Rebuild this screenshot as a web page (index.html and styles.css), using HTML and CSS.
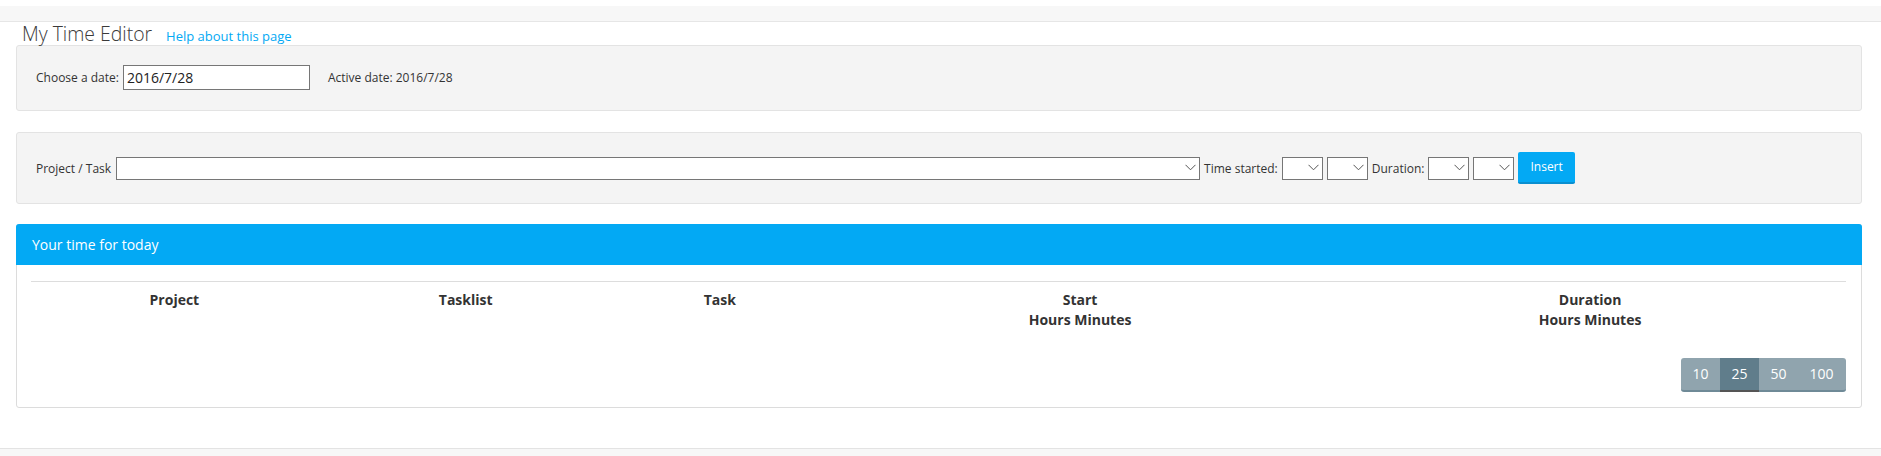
FILE: index.html
```html
<!DOCTYPE html>
<html lang="en">
<head>
<meta charset="utf-8">
<title>My Time Editor</title>
<link rel="stylesheet" href="styles.css">
</head>
<body>
<div class="topbar"></div>
<main class="page">
  <div class="title-row">
    <h1 class="title">My Time Editor</h1>
    <a class="help" href="#">Help about this page</a>
  </div>

  <div class="well well-date">
    <label class="lbl">Choose a date:</label>
    <input class="date-input" type="text" value="2016/7/28">
    <span class="lbl active-date">Active date: 2016/7/28</span>
  </div>

  <div class="well well-form">
    <label class="lbl">Project / Task</label>
    <div class="select select-wide"><svg class="chev" width="11" height="7" viewBox="0 0 11 7"><path d="M0.5 0.8 L5.5 5.8 L10.5 0.8" fill="none" stroke="#555" stroke-width="1"/></svg></div>
    <label class="lbl">Time started:</label>
    <div class="select select-small"><svg class="chev" width="11" height="7" viewBox="0 0 11 7"><path d="M0.5 0.8 L5.5 5.8 L10.5 0.8" fill="none" stroke="#555" stroke-width="1"/></svg></div>
    <div class="select select-small"><svg class="chev" width="11" height="7" viewBox="0 0 11 7"><path d="M0.5 0.8 L5.5 5.8 L10.5 0.8" fill="none" stroke="#555" stroke-width="1"/></svg></div>
    <label class="lbl">Duration:</label>
    <div class="select select-small"><svg class="chev" width="11" height="7" viewBox="0 0 11 7"><path d="M0.5 0.8 L5.5 5.8 L10.5 0.8" fill="none" stroke="#555" stroke-width="1"/></svg></div>
    <div class="select select-small"><svg class="chev" width="11" height="7" viewBox="0 0 11 7"><path d="M0.5 0.8 L5.5 5.8 L10.5 0.8" fill="none" stroke="#555" stroke-width="1"/></svg></div>
    <button class="btn-insert" type="button">Insert</button>
  </div>

  <section class="panel">
    <div class="panel-head">Your time for today</div>
    <div class="panel-body">
      <table class="grid">
        <colgroup>
          <col class="c1"><col class="c2"><col class="c3"><col class="c4"><col class="c5">
        </colgroup>
        <thead>
          <tr>
            <th>Project</th>
            <th>Tasklist</th>
            <th>Task</th>
            <th>Start<br>Hours Minutes</th>
            <th>Duration<br>Hours Minutes</th>
          </tr>
        </thead>
      </table>
      <div class="pager">
        <span class="pg">10</span><span class="pg pg-active">25</span><span class="pg">50</span><span class="pg">100</span>
      </div>
    </div>
  </section>
</main>
<footer class="footer"></footer>
</body>
</html>
```
FILE: styles.css
```css
* { box-sizing: border-box; }
html, body { margin: 0; padding: 0; background: #fff; }
body {
  font-family: "Open Sans", "DejaVu Sans", sans-serif;
  color: #333;
  font-size: 12px;
  height: 456px;
  overflow: hidden;
}
.topbar {
  margin-top: 6px;
  height: 16px;
  background: #f7f7f7;
  border-bottom: 1px solid #e6e6e6;
}
.page {
  padding: 0 19px 0 16px;
}
.title-row {
  display: flex;
  align-items: baseline;
  height: 23px;
  padding-left: 6px;
  gap: 14px;
}
.title {
  margin: 0;
  font-size: 19.4px;
  font-weight: 300;
  line-height: 23px;
  color: #3a3a3a;
}
.help {
  font-size: 13px;
  color: #03a9f4;
  text-decoration: none;
}
.well {
  display: flex;
  align-items: center;
  background: #f4f4f4;
  border: 1px solid #e3e3e3;
  border-radius: 3px;
  padding: 19px 19px;
}
.well-date {
  padding-bottom: 20px;
  margin-bottom: 21px;
}
.well-form {
  gap: 4px;
  margin-bottom: 20px;
}
.lbl {
  font-size: 12px;
  color: #333;
  white-space: nowrap;
}
.date-input {
  width: 187px;
  height: 25px;
  margin: 0 0 0 4px;
  padding: 0 3px;
  border: 1px solid #767676;
  background: #fff;
  font-family: "Open Sans", "DejaVu Sans", sans-serif;
  font-size: 14px;
  color: #222;
  outline: none;
}
.active-date {
  margin-left: 18px;
}
.select {
  height: 23px;
  border: 1px solid #767676;
  background: #fff;
  display: flex;
  align-items: center;
  justify-content: flex-end;
  padding-right: 3px;
}
.select-wide { width: 1084px; margin-left: 1px; }
.select-small { width: 41px; }
.chev { display: block; margin-top: -2px; }
.btn-insert {
  height: 32px;
  padding: 0 12px;
  border: 0;
  border-bottom: 2px solid #0a8fd0;
  border-radius: 2px;
  background: #03a9f4;
  color: #fff;
  font-family: "Open Sans", "DejaVu Sans", sans-serif;
  font-size: 12px;
  line-height: 30px;
}
.panel {
  border: 1px solid #dcdcdc;
  border-radius: 3px;
  background: #fff;
}
.panel-head {
  margin: -1px -1px 0;
  height: 41px;
  line-height: 41px;
  padding: 0 16px;
  background: #03a9f4;
  border-radius: 3px 3px 0 0;
  color: #fff;
  font-size: 14px;
}
.panel-body {
  padding: 16px 15px 15px 14px;
}
.grid {
  width: 100%;
  border-collapse: collapse;
  border-top: 1px solid #dddddd;
}
.grid .c1 { width: 15.8%; }
.grid .c2 { width: 16.3%; }
.grid .c3 { width: 11.7%; }
.grid .c4 { width: 28%; }
.grid .c5 { width: 28.2%; }
.grid th {
  padding: 8px;
  font-size: 14px;
  font-weight: 700;
  line-height: 20px;
  color: #333;
  text-align: center;
  vertical-align: top;
}
.pager {
  margin-top: 20px;
  display: flex;
  justify-content: flex-end;
}
.pg {
  display: block;
  height: 34px;
  line-height: 32px;
  padding: 0 11.5px;
  background: #90a4ae;
  border-bottom: 2px solid #6f8a97;
  color: #fff;
  font-size: 14px;
}
.pg:first-child { border-radius: 3px 0 0 3px; }
.pg:last-child { border-radius: 0 3px 3px 0; padding-right: 12.5px; }
.pg-active {
  background: #607d8b;
  border-bottom-color: #555;
}
.footer {
  margin-top: 40px;
  height: 20px;
  background: #f7f7f7;
  border-top: 1px solid #e3e3e3;
}
```
